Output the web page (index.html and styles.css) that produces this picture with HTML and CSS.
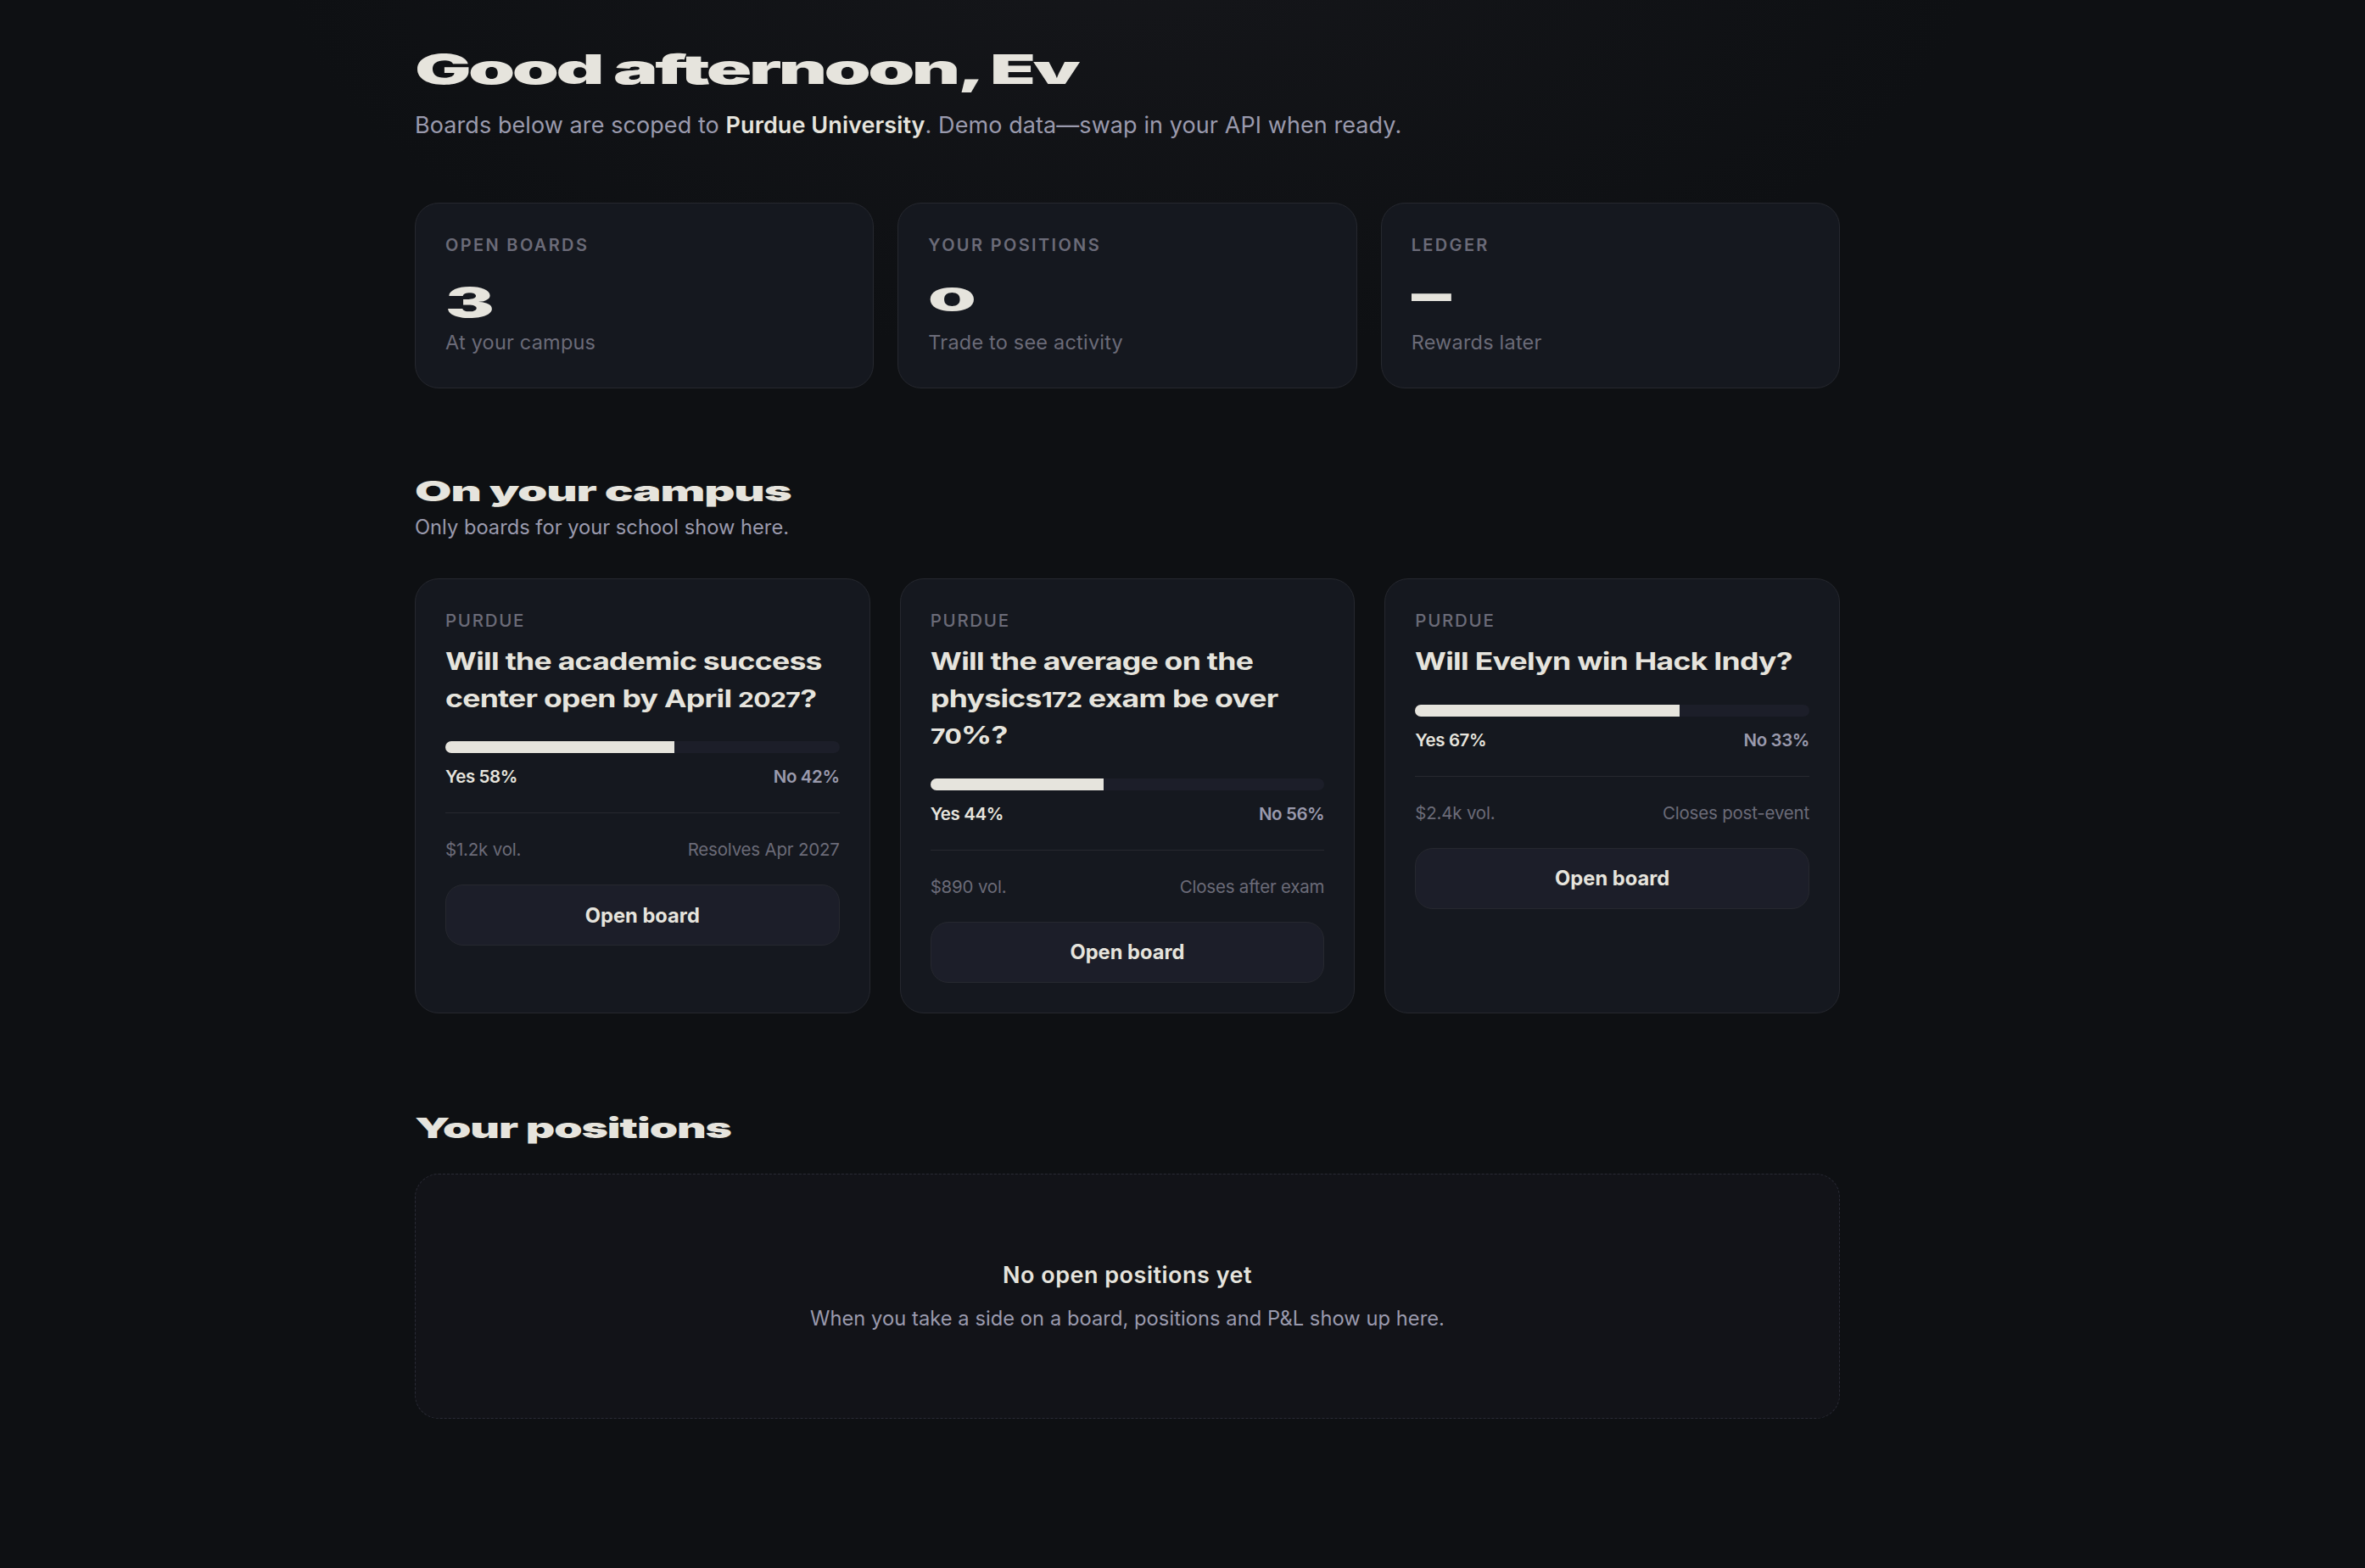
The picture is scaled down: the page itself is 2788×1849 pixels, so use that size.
FILE: index.html
```
<!DOCTYPE html>
<html lang="en">
<head>
    <meta charset="UTF-8">
    <meta name="viewport" content="width=device-width, initial-scale=1.0">
    <title>Dashboard</title>
    <link rel="stylesheet" href="styles.css">
</head>
<body>
    <main class="dashboard">
        <header class="intro">
            <h1><span class="wide">Good afternoon, Ev</span></h1>
            <p>Boards below are scoped to <strong>Purdue University</strong>. Demo data—swap in your API when ready.</p>
        </header>

        <section class="stats">
            <div class="stat">
                <div class="stat-label">Open boards</div>
                <div class="stat-value low"><span class="wide">3</span></div>
                <div class="stat-note">At your campus</div>
            </div>
            <div class="stat">
                <div class="stat-label">Your positions</div>
                <div class="stat-value small"><span class="wide">0</span></div>
                <div class="stat-note">Trade to see activity</div>
            </div>
            <div class="stat">
                <div class="stat-label">Ledger</div>
                <div class="stat-value dash"><span class="wide">—</span></div>
                <div class="stat-note">Rewards later</div>
            </div>
        </section>

        <section class="campus">
            <h2><span class="wide">On your campus</span></h2>
            <p class="section-sub">Only boards for your school show here.</p>
            <div class="boards">
                <article class="board">
                    <div class="board-school">Purdue</div>
                    <h3>Will the academic success center open by April <span class="num">2027</span>?</h3>
                    <div class="bar"><div class="bar-fill" style="width: 58%"></div></div>
                    <div class="odds"><span>Yes 58%</span><span class="no">No 42%</span></div>
                    <div class="meta"><span>$1.2k vol.</span><span>Resolves Apr 2027</span></div>
                    <button class="open-btn">Open board</button>
                </article>
                <article class="board">
                    <div class="board-school">Purdue</div>
                    <h3>Will the average on the physics<span class="num">172</span> exam be over <span class="num">70</span>%?</h3>
                    <div class="bar"><div class="bar-fill" style="width: 44%"></div></div>
                    <div class="odds"><span>Yes 44%</span><span class="no">No 56%</span></div>
                    <div class="meta"><span>$890 vol.</span><span>Closes after exam</span></div>
                    <button class="open-btn">Open board</button>
                </article>
                <article class="board">
                    <div class="board-school">Purdue</div>
                    <h3>Will Evelyn win Hack Indy?</h3>
                    <div class="bar"><div class="bar-fill" style="width: 67%"></div></div>
                    <div class="odds"><span>Yes 67%</span><span class="no">No 33%</span></div>
                    <div class="meta"><span>$2.4k vol.</span><span>Closes post-event</span></div>
                    <button class="open-btn">Open board</button>
                </article>
            </div>
        </section>

        <section class="positions">
            <h2><span class="wide">Your positions</span></h2>
            <div class="empty">
                <div class="empty-title">No open positions yet</div>
                <p>When you take a side on a board, positions and P&amp;L show up here.</p>
            </div>
        </section>
    </main>
</body>
</html>
```

FILE: styles.css
```
* {
    box-sizing: border-box;
    margin: 0;
    padding: 0;
}

body {
    min-height: 1849px;
    padding: 53px 0 0 489px;
    background: radial-gradient(ellipse 1000px 480px at 1329px -60px, #15161a 0%, #0e1013 100%) no-repeat #0e1013;
    color: #e6e4dd;
    font-family: Inter, "Open Sans", sans-serif;
    font-size: 27px;
}

.dashboard {
    width: 1680px;
}

h1, h2 {
    font-weight: 900;
    white-space: nowrap;
}

/* display type is stretched for an extended look */
.wide {
    display: inline-block;
    transform: scaleX(1.7);
    transform-origin: left;
}

h1 {
    font-size: 48px;
    line-height: 58px;
    letter-spacing: -0.04em;
}

h1 .wide {
    transform: scaleX(1.84);
}

.intro p {
    margin-top: 16px;
    line-height: 42px;
    color: #9a9aad;
    letter-spacing: 0.08px;
}

.intro strong {
    color: #e6e4dd;
    font-weight: 600;
}

.stats {
    display: grid;
    grid-template-columns: repeat(3, 1fr);
    gap: 28px;
    margin-top: 70px;
}

.stat {
    height: 219px;
    padding: 34px 35px;
    background: #15181f;
    border: 1px solid #26282f;
    border-radius: 28px;
}

.stat-label {
    font-size: 20px;
    line-height: 30px;
    font-weight: 600;
    letter-spacing: 2.35px;
    text-transform: uppercase;
    color: #6b6b78;
}

.stat-value {
    height: 52px;
    margin-top: 21px;
    font-size: 48px;
    line-height: 52px;
    font-weight: 900;
}

.stat-value.low {
    line-height: 64px;
}

.stat-value.low .wide {
    transform: scaleX(1.8);
}

.stat-value.small {
    font-size: 38px;
    line-height: 57px;
}

.stat-value.small .wide {
    transform: scaleX(2.1);
}

.stat-value.dash {
    font-size: 60px;
    line-height: 42px;
}

.stat-value.dash .wide {
    transform: scaleX(0.78);
}

.stat-note {
    margin-top: 9px;
    font-size: 23.5px;
    line-height: 36px;
    letter-spacing: 0.2px;
    color: #6b6b78;
}

.campus {
    margin-top: 98px;
}

h2 {
    font-size: 33px;
    line-height: 46px;
    letter-spacing: -0.02em;
}

.section-sub {
    margin-top: 1px;
    font-size: 23.7px;
    line-height: 38px;
    color: #9a9aad;
}

.boards {
    display: grid;
    grid-template-columns: repeat(3, 1fr);
    gap: 35px;
    margin-top: 41px;
}

.board {
    height: 513px;
    padding: 34px 35px;
    background: #15181f;
    border: 1px solid #26282f;
    border-radius: 28px;
}

.board-school {
    font-size: 20.5px;
    line-height: 30px;
    font-weight: 500;
    letter-spacing: 1.7px;
    text-transform: uppercase;
    color: #6b6b78;
}

h3 {
    width: 78.7%;
    margin-top: 12px;
    font-size: 28px;
    line-height: 43.5px;
    font-weight: 700;
    letter-spacing: -0.02em;
    transform: scaleX(1.27);
    transform-origin: left;
}

.num {
    font-size: 0.85em;
    line-height: 1;
}

.bar {
    height: 14px;
    margin-top: 28px;
    background: #1c1e29;
    border-radius: 7px;
    overflow: hidden;
}

.bar-fill {
    height: 100%;
    background: #e6e4dd;
}

.odds {
    display: flex;
    justify-content: space-between;
    margin-top: 14px;
    font-size: 20.5px;
    line-height: 28px;
    font-weight: 600;
    letter-spacing: -0.4px;
}

.odds .no {
    color: #9a9aad;
}

.meta {
    display: flex;
    justify-content: space-between;
    margin-top: 28px;
    padding-top: 28px;
    border-top: 1px solid #26282f;
    font-size: 20.5px;
    line-height: 30px;
    letter-spacing: -0.2px;
    color: #6b6b78;
}

.open-btn {
    width: 100%;
    height: 72px;
    margin-top: 26px;
    background: #1c1e29;
    border: 1px solid #26282f;
    border-radius: 21px;
    color: #e6e4dd;
    font-family: inherit;
    font-size: 23.7px;
    font-weight: 700;
}

.positions {
    margin-top: 112px;
}

.positions .wide {
    transform: scaleX(1.62);
}

.empty {
    height: 289px;
    margin-top: 31px;
    padding: 98px 0;
    background: #121318;
    border: 1px dashed #2a2b36;
    border-radius: 28px;
    text-align: center;
}

.empty-title {
    line-height: 42px;
    font-weight: 600;
    letter-spacing: 0.5px;
}

.empty p {
    margin-top: 10px;
    font-size: 23.7px;
    line-height: 40px;
    letter-spacing: 0.05px;
    color: #9a9aad;
}
```
